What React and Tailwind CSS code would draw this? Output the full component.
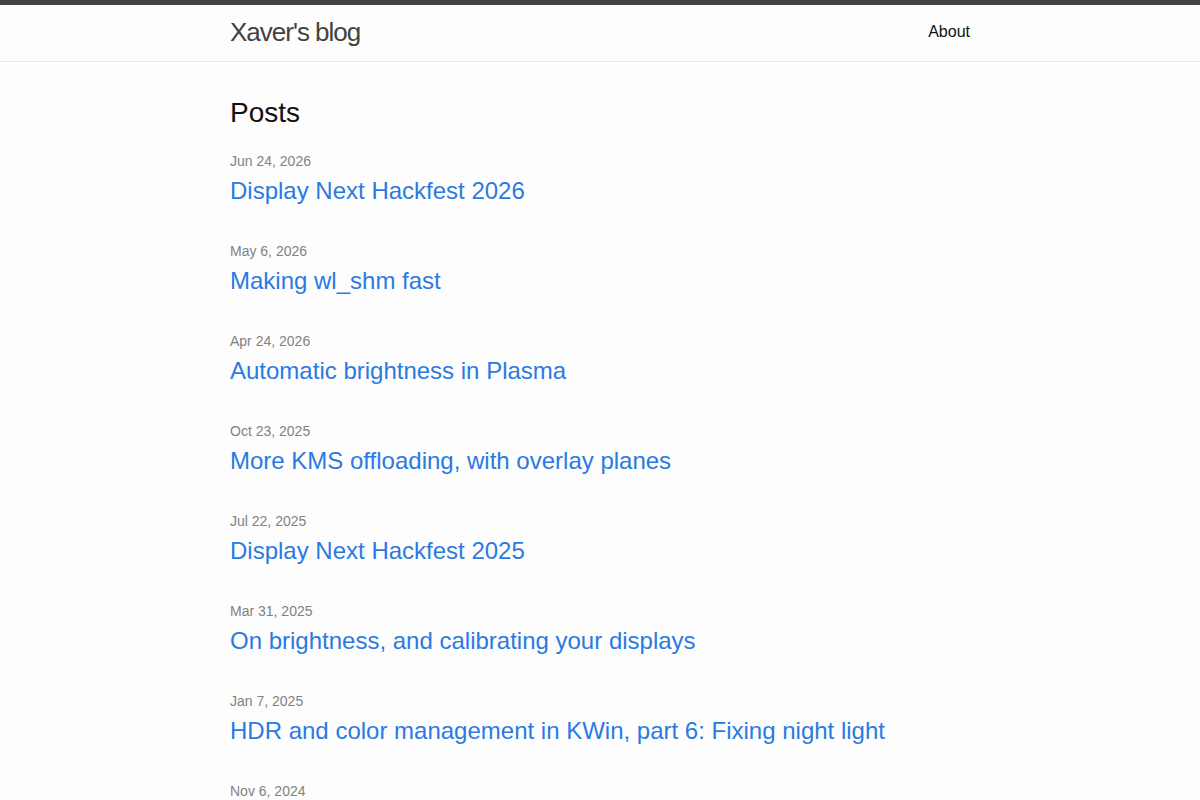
const posts = [
  { date: "Jun 24, 2026", title: "Display Next Hackfest 2026" },
  { date: "May 6, 2026", title: "Making wl_shm fast" },
  { date: "Apr 24, 2026", title: "Automatic brightness in Plasma" },
  { date: "Oct 23, 2025", title: "More KMS offloading, with overlay planes" },
  { date: "Jul 22, 2025", title: "Display Next Hackfest 2025" },
  { date: "Mar 31, 2025", title: "On brightness, and calibrating your displays" },
  { date: "Jan 7, 2025", title: "HDR and color management in KWin, part 6: Fixing night light" },
  { date: "Nov 6, 2024", title: "HDR and color management in KWin, part 5: HDR on SDR laptops" },
];

export default function App() {
  return (
    <div className="min-h-screen bg-[#fdfdfd] text-[#111] text-base leading-normal font-['Liberation_Sans',Arial,sans-serif]">
      {/* Header */}
      <header className="border-t-[5px] border-t-[#424242] border-b border-b-[#e8e8e8] min-h-[62px]">
        <div className="max-w-[740px] mx-auto flex justify-between">
          <a href="#" className="text-[26px] leading-[54px] tracking-[-1px] font-light text-[#424242]">
            Xaver's blog
          </a>
          <nav className="leading-[54px]">
            <a href="#" className="text-[#111]">About</a>
          </nav>
        </div>
      </header>

      {/* Content */}
      <main className="max-w-[740px] mx-auto py-[30px]">
        <h2 className="text-[28px] leading-[42px] mb-[17px]">Posts</h2>
        <ul>
          {posts.map((p) => (
            <li key={p.title} className="mb-[32px]">
              <span className="block text-sm leading-[21px] text-[#828282]">{p.date}</span>
              <h3>
                <a href="#" className="block text-2xl leading-[36px] pt-px text-[#2a7ae2]">{p.title}</a>
              </h3>
            </li>
          ))}
        </ul>
      </main>
    </div>
  );
}
